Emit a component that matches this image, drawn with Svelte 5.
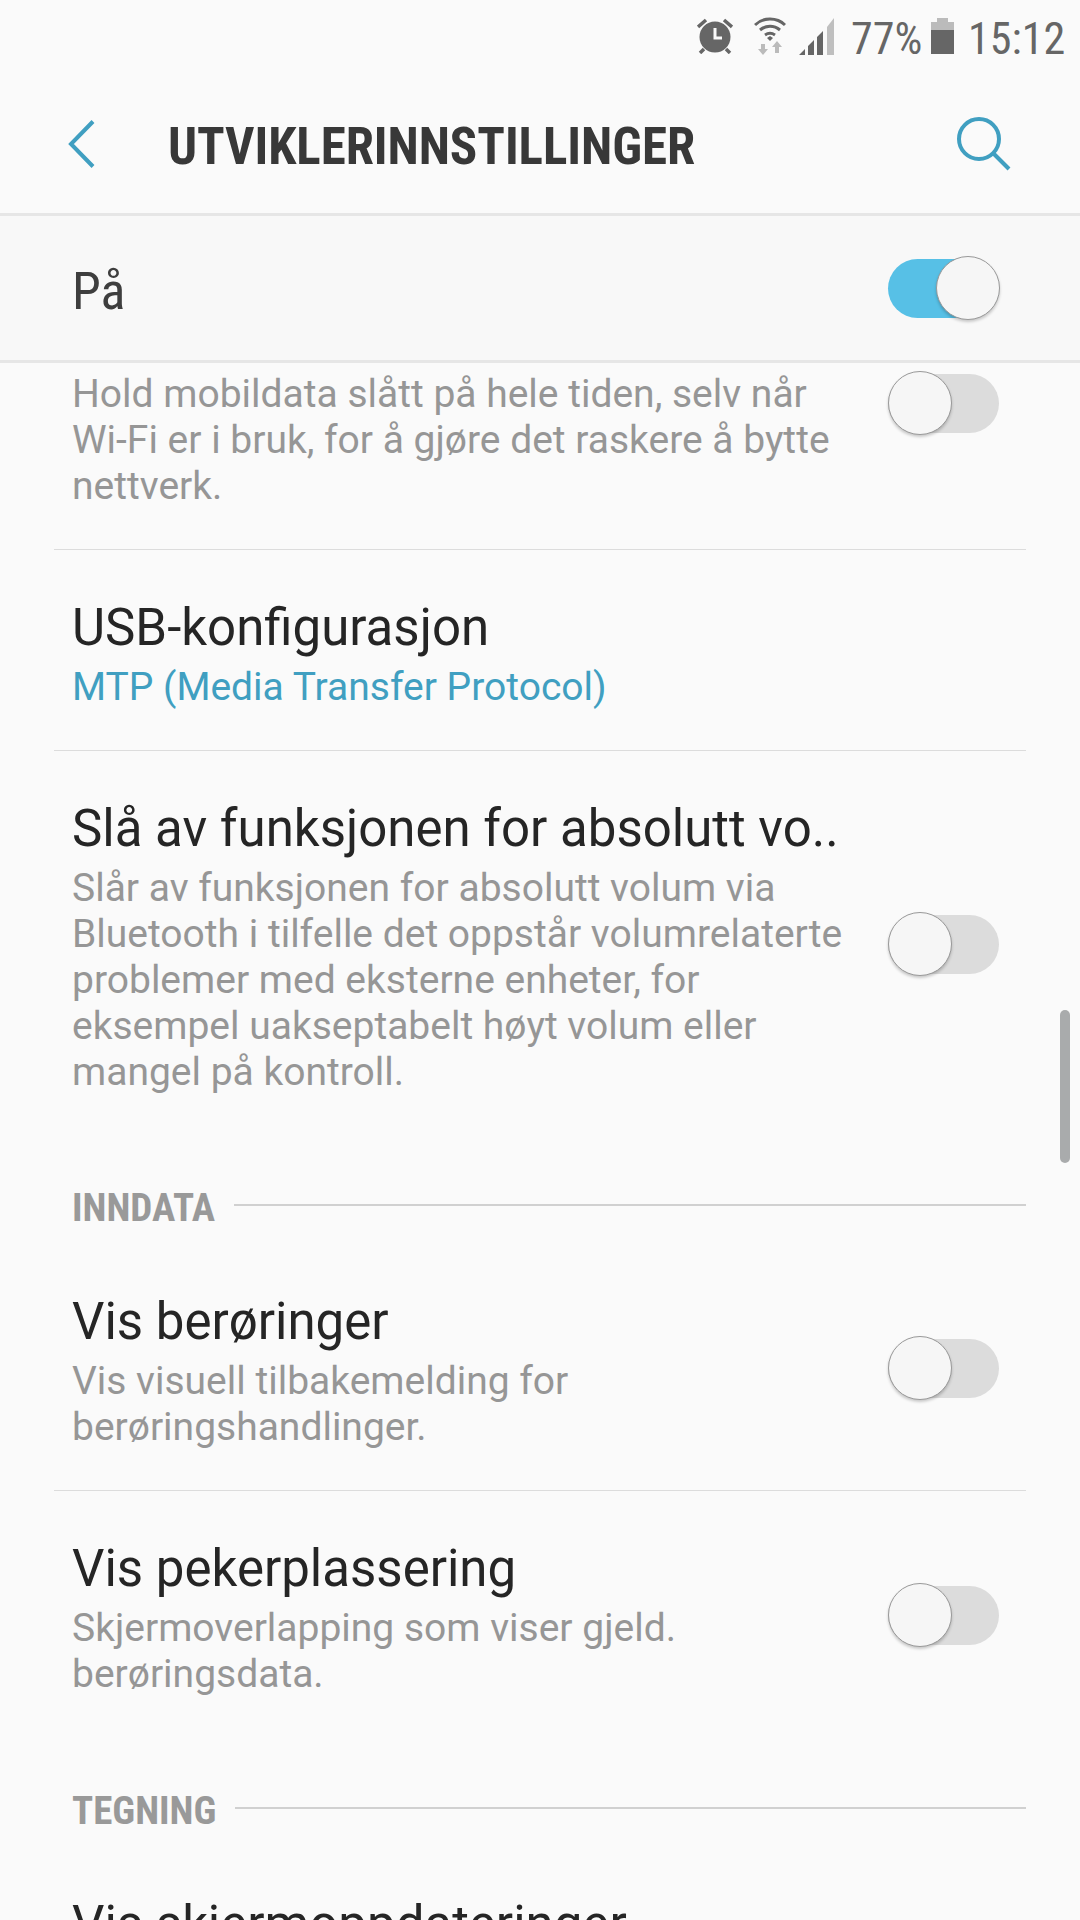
<script>
  const sections = [
    {
      rows: [
        { desc: 'Hold mobildata slått på hele tiden, selv når Wi-Fi er i bruk, for å gjøre det raskere å bytte nettverk.', toggle: true, clipped: true },
        { title: 'USB-konfigurasjon', value: 'MTP (Media Transfer Protocol)' },
        { title: 'Slå av funksjonen for absolutt vo..', desc: 'Slår av funksjonen for absolutt volum via Bluetooth i tilfelle det oppstår volumrelaterte problemer med eksterne enheter, for eksempel uakseptabelt høyt volum eller mangel på kontroll.', toggle: true }
      ]
    },
    {
      label: 'INNDATA',
      rows: [
        { title: 'Vis berøringer', desc: 'Vis visuell tilbakemelding for berøringshandlinger.', toggle: true },
        { title: 'Vis pekerplassering', desc: 'Skjermoverlapping som viser gjeld. berøringsdata.', toggle: true }
      ]
    },
    {
      label: 'TEGNING',
      wide: true,
      rows: [{ title: 'Vis skjermoppdateringer' }]
    }
  ];
</script>

<div class="screen">
  <div class="statusbar">
    <svg class="alarm" viewBox="0 0 36 36" width="36" height="36">
      <circle cx="18" cy="19" r="15.5" fill="#666" />
      <path d="M1 9l8-7M35 9l-8-7M7 31l-4 4M29 31l4 4" stroke="#666" stroke-width="3.5" fill="none" />
      <path d="M18 10v10h7" stroke="#fafafa" stroke-width="3" fill="none" />
    </svg>
    <svg class="wifi" viewBox="0 0 32 38" width="32" height="38">
      <path d="M1 8C9 0 23 0 31 8M6 13c6-5 14-5 20 0M11 18c3-2 7-2 10 0" stroke="#666" stroke-width="3" fill="none" />
      <path d="M13 21l3-2 3 2-3 3z" fill="#666" />
      <path d="M7 27h4v5h3l-5 6-5-6h3zM21 36h4v-6h3l-5-6-5 6h3z" fill="#bbb" />
    </svg>
    <svg class="signal" viewBox="0 0 36 37" width="36" height="37">
      <path d="M0 37l6-6v6zM9 37v-9l6-6v15zM18 37V19l6-6v24z" fill="#666" />
      <path d="M28 37V9l7-9v37z" fill="#bfbfbf" />
    </svg>
    <span class="percent">77%</span>
    <svg class="battery" viewBox="0 0 23 36" width="23" height="36">
      <path d="M6 0h11v4h6v10H0V4h6z" fill="#bbb" />
      <path d="M0 12h23v24H0z" fill="#666" />
    </svg>
    <span class="clock">15:12</span>
  </div>

  <header class="actionbar">
    <svg class="back" viewBox="0 0 28 48" width="28" height="48">
      <path d="M26 1.5L4 24l22 22.5" stroke="#409fc1" stroke-width="4" fill="none" />
    </svg>
    <h1>UTVIKLERINNSTILLINGER</h1>
    <svg class="search" viewBox="0 0 56 56" width="56" height="56">
      <circle cx="23" cy="23" r="20" stroke="#409fc1" stroke-width="4" fill="none" />
      <path d="M37 37l16 16" stroke="#409fc1" stroke-width="4" fill="none" />
    </svg>
  </header>

  <div class="master">
    <span>På</span>
    <div class="toggle on"><i></i></div>
  </div>

  <main class="list">
    {#each sections as section}
      {#if section.label}
        <div class="section-label" class:wide={section.wide}>
          <span>{section.label}</span>
          <hr />
        </div>
      {/if}
      {#each section.rows as row, i}
        <div class="row" class:clipped={row.clipped} class:last={i === section.rows.length - 1}>
          <div class="text">
            {#if row.title}<div class="title">{row.title}</div>{/if}
            {#if row.value}<div class="value">{row.value}</div>{/if}
            {#if row.desc}<div class="desc">{row.desc}</div>{/if}
          </div>
          {#if row.toggle}
            <div class="toggle"><i></i></div>
          {/if}
        </div>
      {/each}
    {/each}
    <div class="scrollbar"></div>
  </main>
</div>

<style>
  :global(body) {
    background: #fafafa;
  }

  .screen {
    width: 1080px;
    height: 1920px;
    overflow: hidden;
    background: #fafafa;
    font-family: Roboto, sans-serif;
    display: flex;
    flex-direction: column;
  }

  .statusbar {
    height: 72px;
    display: flex;
    align-items: center;
    justify-content: flex-end;
    padding-right: 14px;
    color: #666;
    font-size: 44px;
  }

  .alarm {
    margin-right: 21px;
  }

  .wifi {
    margin-right: 13px;
  }

  .signal {
    margin-right: 16px;
  }

  .percent {
    width: 72px;
    margin-right: 8px;
    padding-top: 5px;
    white-space: nowrap;
    font-stretch: 75%;
  }

  .battery {
    margin-right: 14px;
  }

  .clock {
    width: 98px;
    padding-top: 5px;
    white-space: nowrap;
    font-stretch: 75%;
  }

  .actionbar {
    height: 138px;
    display: flex;
    align-items: center;
    padding: 3px 68px 0 67px;
    border-bottom: 3px solid #e6e6e6;
  }

  .actionbar h1 {
    flex: 1;
    margin: 0 0 0 73px;
    padding-top: 5px;
    font-size: 51px;
    font-weight: 700;
    font-stretch: 75%;
    letter-spacing: -0.06px;
    color: #383838;
    white-space: nowrap;
  }

  .master {
    height: 144px;
    display: flex;
    align-items: center;
    justify-content: space-between;
    padding: 0 81px 0 72px;
    background: #f8f8f8;
    border-bottom: 3px solid #e6e6e6;
    font-size: 52px;
    font-stretch: 75%;
    color: #3e3e3e;
  }

  .master span {
    padding-top: 6px;
  }

  .list {
    position: relative;
    flex: 1;
    overflow: hidden;
    padding: 0 54px;
  }

  .row {
    display: flex;
    align-items: center;
    justify-content: space-between;
    padding: 48px 27px 40px 18px;
    border-bottom: 1px solid #dcdcdc;
  }

  .row .toggle {
    margin-bottom: 5px;
  }

  .row.clipped {
    align-items: flex-start;
    padding-top: 2px;
    padding-bottom: 40px;
  }

  .row.clipped .toggle {
    margin-top: 9px;
    margin-bottom: 0;
  }

  .row.last {
    border-bottom: none;
  }

  .text {
    width: 790px;
  }

  .title {
    font-size: 51px;
    line-height: 60px;
    color: #252525;
    white-space: nowrap;
  }

  .value {
    font-size: 39px;
    line-height: 46px;
    margin-top: 6px;
    color: #409fc1;
  }

  .desc {
    font-size: 39px;
    line-height: 46px;
    margin-top: 6px;
    color: #969696;
  }

  .section-label {
    display: flex;
    align-items: center;
    gap: 19px;
    padding-left: 18px;
    margin-top: 51px;
    margin-bottom: 14px;
    line-height: 44px;
    font-size: 39px;
    font-weight: 700;
    font-stretch: 75%;
    color: #999;
  }

  .section-label.wide {
    margin-top: 52px;
  }

  .section-label hr {
    flex: 1;
    height: 2px;
    margin: 0 0 6px;
    border: none;
    background: #d0d0d0;
  }

  .toggle {
    position: relative;
    flex: none;
    width: 111px;
    height: 59px;
    border-radius: 30px;
    background: #dcdcdc;
  }

  .toggle i {
    position: absolute;
    left: 0;
    top: -3px;
    width: 62px;
    height: 62px;
    border: 1px solid #999;
    border-radius: 50%;
    background: #f6f6f6;
    box-shadow: 0 2px 3px rgba(0, 0, 0, 0.2);
  }

  .toggle.on {
    background: #57c0e6;
  }

  .toggle.on i {
    left: 48px;
  }

  .scrollbar {
    position: absolute;
    right: 10px;
    top: 647px;
    width: 10px;
    height: 153px;
    border-radius: 5px;
    background: #a9abac;
  }
</style>
